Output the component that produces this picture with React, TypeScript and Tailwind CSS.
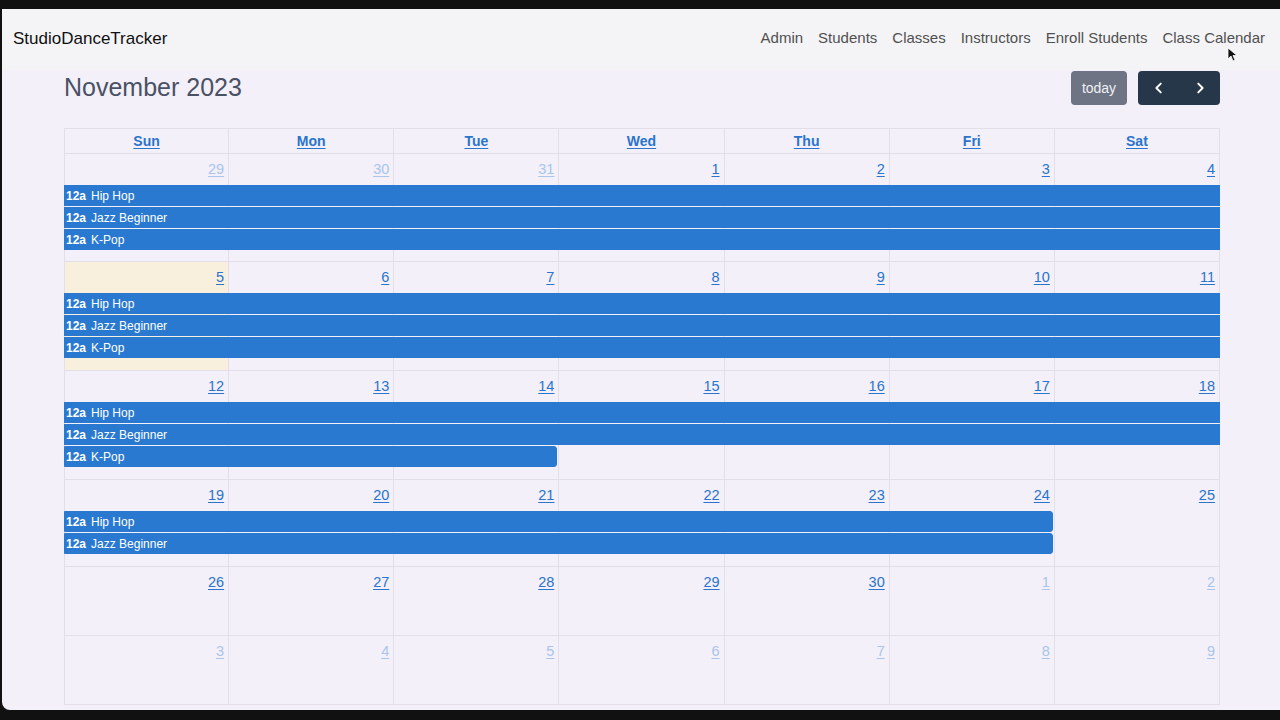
import React from 'react';

type Day = { n: number; other?: boolean; today?: boolean };
type Ev = { title: string; span: number; ends?: boolean };
type Week = { days: Day[]; events: Ev[]; cls: string };

const DOW = ['Sun', 'Mon', 'Tue', 'Wed', 'Thu', 'Fri', 'Sat'];

const NAV = ['Admin', 'Students', 'Classes', 'Instructors', 'Enroll Students', 'Class Calendar'];

// full class names so tailwind picks them up
const COL_START = ['col-start-1', 'col-start-2', 'col-start-3', 'col-start-4', 'col-start-5', 'col-start-6', 'col-start-7'];
const COL_SPAN: Record<number, string> = {
  3: 'col-span-3',
  6: 'col-span-6',
  7: 'col-span-7',
};
const ROW_START = ['row-start-2', 'row-start-3', 'row-start-4'];

const days = (nums: number[], otherUntil = -1, otherFrom = 99): Day[] =>
  nums.map((n, i) => ({ n, other: i <= otherUntil || i >= otherFrom }));

const WEEKS: Week[] = [
  {
    days: days([29, 30, 31, 1, 2, 3, 4], 2),
    events: [
      { title: 'Hip Hop', span: 7 },
      { title: 'Jazz Beginner', span: 7 },
      { title: 'K-Pop', span: 7 },
    ],
    cls: 'h-[108px] grid-rows-[31px_22px_22px_22px_1fr]',
  },
  {
    days: [{ n: 5, today: true }, ...days([6, 7, 8, 9, 10, 11])],
    events: [
      { title: 'Hip Hop', span: 7 },
      { title: 'Jazz Beginner', span: 7 },
      { title: 'K-Pop', span: 7 },
    ],
    cls: 'h-[109px] grid-rows-[31px_22px_22px_22px_1fr]',
  },
  {
    days: days([12, 13, 14, 15, 16, 17, 18]),
    events: [
      { title: 'Hip Hop', span: 7 },
      { title: 'Jazz Beginner', span: 7 },
      { title: 'K-Pop', span: 3, ends: true },
    ],
    cls: 'h-[109px] grid-rows-[31px_22px_22px_22px_1fr]',
  },
  {
    days: days([19, 20, 21, 22, 23, 24, 25]),
    events: [
      { title: 'Hip Hop', span: 6, ends: true },
      { title: 'Jazz Beginner', span: 6, ends: true },
    ],
    cls: 'h-[87px] grid-rows-[31px_22px_22px_1fr]',
  },
  {
    days: days([26, 27, 28, 29, 30, 1, 2], -1, 5),
    events: [],
    cls: 'h-[69px] grid-rows-[31px_1fr]',
  },
  {
    days: days([3, 4, 5, 6, 7, 8, 9], 6),
    events: [],
    cls: 'h-[69px] grid-rows-[31px_1fr]',
  },
];

function WeekRow({ week }: { week: Week }) {
  return (
    <div className={`grid grid-cols-7 ${week.cls}`}>
      {week.days.map((d, i) => (
        <div
          key={i}
          className={`${COL_START[i]} row-span-full border-b border-r border-[#e2dfe8] ${i === 0 ? 'border-l' : ''} ${
            d.today ? 'bg-[#f8f0dd]' : ''
          } flex justify-end px-[4px] pt-[5px]`}
        >
          <a
            className={`h-[20px] text-[14.5px] leading-[20px] underline underline-offset-2 ${
              d.other ? 'text-[#a9c5ea]' : 'text-[#2a74cc]'
            }`}
          >
            {d.n}
          </a>
        </div>
      ))}
      {week.events.map((e, i) => (
        <div
          key={e.title}
          className={`col-start-1 ${COL_SPAN[e.span]} ${ROW_START[i]} mb-px flex h-[21px] items-center border border-[#2a79d0] bg-[#2a79d0] pl-px text-[12px] text-white ${
            e.ends ? 'mr-[2px] rounded-r-[3px]' : ''
          }`}
        >
          <span className="font-bold">12a</span>
          <span className="ml-[5px]">{e.title}</span>
        </div>
      ))}
    </div>
  );
}

export default function App() {
  return (
    <div className="relative h-[720px] w-[1280px] overflow-hidden bg-[#111] pb-[10px] pl-[2px] pt-[9px] font-['Liberation_Sans',Arial,sans-serif]">
      <div className="flex h-full flex-col overflow-hidden rounded-bl-[8px] bg-[#f3f0fa]">
        {/* Navbar */}
        <nav className="flex h-[61px] shrink-0 items-center justify-between bg-[#f4f4f7] pb-[2px] pl-[11px] pr-[15px]">
          <span className="text-[17px] text-[#111]">StudioDanceTracker</span>
          <div className="flex gap-[15px] text-[15px] text-[#505050]">
            {NAV.map((n) => (
              <a key={n}>{n}</a>
            ))}
          </div>
        </nav>

        {/* Calendar */}
        <div className="ml-[62px] mr-[60px] flex flex-col">
          <div className="mb-[23px] mt-px flex h-[34px] items-center justify-between">
            <h2 className="text-[25px] text-[#4a5164]">November 2023</h2>
            <div className="flex items-center gap-[11px]">
              <button className="h-[34px] w-[56px] rounded-[4px] bg-[#6e7483] text-[14px] text-[#eef0f3]">today</button>
              <div className="flex h-[34px] w-[82px] items-center rounded-[4px] bg-[#27374a]">
                <button className="flex flex-1 justify-center">
                  <svg width="14" height="14" viewBox="0 0 16 16" fill="none" stroke="white" strokeWidth="2.2" strokeLinecap="round" strokeLinejoin="round">
                    <path d="M10 3 5 8l5 5" />
                  </svg>
                </button>
                <button className="flex flex-1 justify-center">
                  <svg width="14" height="14" viewBox="0 0 16 16" fill="none" stroke="white" strokeWidth="2.2" strokeLinecap="round" strokeLinejoin="round">
                    <path d="m6 3 5 5-5 5" />
                  </svg>
                </button>
              </div>
            </div>
          </div>

          <div className="flex flex-col">
            <div className="grid h-[26px] grid-cols-7 border-t border-[#e2dfe8]">
              {DOW.map((d, i) => (
                <div
                  key={d}
                  className={`flex items-center justify-center border-b border-r border-[#e2dfe8] ${i === 0 ? 'border-l' : ''}`}
                >
                  <a className="text-[14px] font-bold text-[#2a74cc] underline underline-offset-2">{d}</a>
                </div>
              ))}
            </div>
            {WEEKS.map((w, i) => (
              <WeekRow key={i} week={w} />
            ))}
          </div>
        </div>
      </div>

      {/* mouse pointer */}
      <svg className="absolute left-[1227px] top-[47px]" width="10" height="15" viewBox="0 0 10 15">
        <path d="M1 1v11l3-3 2 5 2-1-2-4.5h4z" fill="#111" stroke="#fff" strokeWidth="0.8" />
      </svg>
    </div>
  );
}
